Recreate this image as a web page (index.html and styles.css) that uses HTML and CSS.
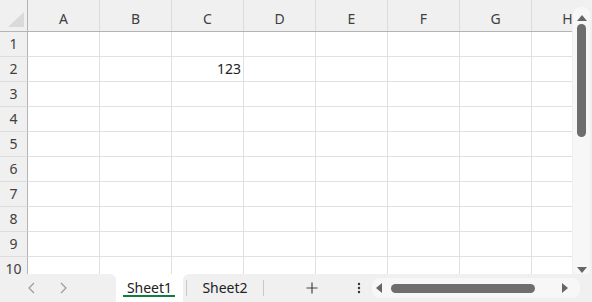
FILE: index.html
```html
<!DOCTYPE html>
<html>
<head>
<meta charset="utf-8">
<link rel="stylesheet" href="styles.css">
</head>
<body>
<div class="app">
  <div class="main">
    <div class="sheet">
      <div class="row head">
        <div class="corner"><div class="tri"></div></div>
        <div class="ch">A</div><div class="ch">B</div><div class="ch">C</div><div class="ch">D</div>
        <div class="ch">E</div><div class="ch">F</div><div class="ch">G</div><div class="ch">H</div>
      </div>
      <div class="row"><div class="rh">1</div><div class="c"></div><div class="c"></div><div class="c"></div><div class="c"></div><div class="c"></div><div class="c"></div><div class="c"></div><div class="c"></div></div>
      <div class="row"><div class="rh">2</div><div class="c"></div><div class="c"></div><div class="c num">123</div><div class="c"></div><div class="c"></div><div class="c"></div><div class="c"></div><div class="c"></div></div>
      <div class="row"><div class="rh">3</div><div class="c"></div><div class="c"></div><div class="c"></div><div class="c"></div><div class="c"></div><div class="c"></div><div class="c"></div><div class="c"></div></div>
      <div class="row"><div class="rh">4</div><div class="c"></div><div class="c"></div><div class="c"></div><div class="c"></div><div class="c"></div><div class="c"></div><div class="c"></div><div class="c"></div></div>
      <div class="row"><div class="rh">5</div><div class="c"></div><div class="c"></div><div class="c"></div><div class="c"></div><div class="c"></div><div class="c"></div><div class="c"></div><div class="c"></div></div>
      <div class="row"><div class="rh">6</div><div class="c"></div><div class="c"></div><div class="c"></div><div class="c"></div><div class="c"></div><div class="c"></div><div class="c"></div><div class="c"></div></div>
      <div class="row"><div class="rh">7</div><div class="c"></div><div class="c"></div><div class="c"></div><div class="c"></div><div class="c"></div><div class="c"></div><div class="c"></div><div class="c"></div></div>
      <div class="row"><div class="rh">8</div><div class="c"></div><div class="c"></div><div class="c"></div><div class="c"></div><div class="c"></div><div class="c"></div><div class="c"></div><div class="c"></div></div>
      <div class="row"><div class="rh">9</div><div class="c"></div><div class="c"></div><div class="c"></div><div class="c"></div><div class="c"></div><div class="c"></div><div class="c"></div><div class="c"></div></div>
      <div class="row"><div class="rh">10</div><div class="c"></div><div class="c"></div><div class="c"></div><div class="c"></div><div class="c"></div><div class="c"></div><div class="c"></div><div class="c"></div></div>
    </div>
    <div class="vscroll">
      <div class="vtrack">
        <div class="arr up"></div>
        <div class="vthumb"></div>
        <div class="vspace"></div>
        <div class="arr down"></div>
      </div>
    </div>
  </div>
  <div class="tabbar">
    <div class="left">
      <span class="nav">
        <svg width="10" height="12" viewBox="0 0 10 12"><path d="M7 1 L2 6 L7 11" fill="none" stroke="#9a9a9a" stroke-width="1.2"/></svg>
      </span>
      <span class="nav">
        <svg width="10" height="12" viewBox="0 0 10 12"><path d="M3 1 L8 6 L3 11" fill="none" stroke="#9a9a9a" stroke-width="1.2"/></svg>
      </span>
    </div>
    <div class="tab active">Sheet1</div>
    <div class="right">
      <div class="sep"></div>
      <div class="tab">Sheet2</div>
      <div class="sep"></div>
      <div class="plus">
        <svg width="12" height="12" viewBox="0 0 12 12"><path d="M6 0.5 V11.5 M0.5 6 H11.5" stroke="#444" stroke-width="1.2"/></svg>
      </div>
      <div class="more">
        <svg width="4" height="12" viewBox="0 0 4 12"><circle cx="2" cy="2" r="1.2" fill="#333"/><circle cx="2" cy="6" r="1.2" fill="#333"/><circle cx="2" cy="10" r="1.2" fill="#333"/></svg>
      </div>
      <div class="htrack">
        <div class="harr hleft"></div>
        <div class="hthumb"></div>
        <div class="hspace"></div>
        <div class="harr hright"></div>
      </div>
    </div>
  </div>
</div>
</body>
</html>
```
FILE: styles.css
```css
* { box-sizing: border-box; }
html, body { margin: 0; padding: 0; }
body {
  width: 592px;
  height: 302px;
  overflow: hidden;
  background: #f0f0f0;
  font-family: "Noto Sans", "Noto Sans CJK JP", sans-serif;
  color: #333;
}
.app { width: 592px; height: 302px; display: flex; flex-direction: column; }
.main { display: flex; height: 274px; }
.sheet { width: 572px; height: 274px; overflow: hidden; background: #fff; }
.row { display: flex; height: 25px; }
.row.head { height: 32px; background: #f0f0f0; border-bottom: 1px solid #b4b4b4; }
.corner {
  width: 28px; flex: none;
  border-right: 1px solid #b4b4b4;
  position: relative;
}
.tri {
  position: absolute;
  left: 8px; top: 12px;
  width: 0; height: 0;
  border-left: 16px solid transparent;
  border-bottom: 15px solid #dadada;
}
.ch {
  width: 72px; flex: none;
  border-right: 1px solid #dcdcdc;
  text-align: center;
  font-size: 14px;
  line-height: 20px;
  padding-top: 9px;
  color: #404040;
}
.rh {
  width: 28px; flex: none;
  background: #f0f0f0;
  border-right: 1px solid #b4b4b4;
  border-bottom: 1px solid #dcdcdc;
  text-align: center;
  font-size: 14px;
  line-height: 24px;
  color: #404040;
}
.c {
  width: 72px; flex: none;
  border-right: 1px solid #e1e1e1;
  border-bottom: 1px solid #e1e1e1;
  font-size: 14px;
  line-height: 24px;
  color: #222;
}
.num { text-align: right; padding-right: 2px; }

.vscroll { width: 20px; height: 274px; background: #f0f0f0; padding: 7px 2px 0 1px; }
.vtrack {
  height: 270px;
  background: #f7f7f7;
  border-radius: 8px;
  display: flex; flex-direction: column; align-items: center;
  padding: 8px 0 4px;
}
.arr { width: 0; height: 0; border-left: 5px solid transparent; border-right: 5px solid transparent; flex: none; }
.arr.up { border-bottom: 6px solid #666; }
.arr.down { border-top: 6px solid #666; }
.vthumb { width: 9px; height: 113px; margin-top: 3px; background: #6e6e6e; border-radius: 5px; flex: none; }
.vspace { flex: 1; }

.tabbar { height: 28px; display: flex; background: #fff; }
.left {
  width: 116px; background: #f0f0f0;
  border-top-right-radius: 6px;
  display: flex; align-items: center;
  padding-left: 27px; gap: 21px;
}
.nav { display: flex; align-items: center; }
.tab {
  font-size: 14px;
  color: #222;
  line-height: 28px;
  text-align: center;
}
.tab.active {
  width: 67px;
  position: relative;
  background: #fff;
}
.tab.active::after {
  content: "";
  position: absolute;
  left: 7px; right: 8px; bottom: 5px;
  height: 2px; background: #107c41;
}
.right {
  flex: 1;
  background: #f0f0f0;
  border-top-left-radius: 6px;
  display: flex; align-items: center;
  padding-left: 3px;
}
.sep { width: 1px; height: 16px; background: #c8c8c8; flex: none; }
.right .tab { width: 76px; }
.plus { width: 24px; margin-left: 36px; display: flex; justify-content: center; }
.more { width: 10px; margin-left: 30px; display: flex; justify-content: center; }
.htrack {
  margin-left: 8px;
  width: 208px; height: 20px;
  background: #f7f7f7;
  border-radius: 8px;
  display: flex; align-items: center;
  padding: 0 12px 0 4px;
}
.harr { width: 0; height: 0; border-top: 5px solid transparent; border-bottom: 5px solid transparent; flex: none; }
.hleft { border-right: 6px solid #666; }
.hright { border-left: 6px solid #666; }
.hthumb { width: 144px; height: 9px; margin-left: 9px; background: #6e6e6e; border-radius: 5px; flex: none; }
.hspace { flex: 1; }
```
